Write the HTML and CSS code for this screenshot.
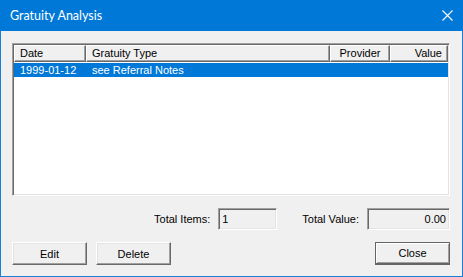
FILE: index.html
```html
<!DOCTYPE html>
<html lang="en">
<head>
    <meta charset="UTF-8">
    <title>Gratuity Analysis</title>
    <link rel="stylesheet" href="styles.css">
</head>
<body>
    <div class="window">
        <div class="titlebar">
            <span class="title">Gratuity Analysis</span>
            <svg class="close-x" width="11" height="11" viewBox="0 0 11 11">
                <path d="M0.5 0.5 L10.5 10.5 M10.5 0.5 L0.5 10.5" stroke="#fff" stroke-width="1.1" fill="none"/>
            </svg>
        </div>
        <div class="content">
            <div class="list">
                <div class="list-header">
                    <div class="col col-date">Date</div>
                    <div class="col col-type">Gratuity Type</div>
                    <div class="col col-provider">Provider</div>
                    <div class="col col-value">Value</div>
                </div>
                <div class="list-row selected">
                    <div class="cell col-date">1999-01-12</div>
                    <div class="cell col-type">see Referral Notes</div>
                    <div class="cell col-provider"></div>
                    <div class="cell col-value"></div>
                </div>
            </div>
            <div class="totals">
                <label>Total Items:</label>
                <div class="field field-items">1</div>
                <label class="label-value">Total Value:</label>
                <div class="field field-value">0.00</div>
            </div>
            <div class="buttons">
                <button class="btn">Edit</button>
                <button class="btn">Delete</button>
                <button class="btn btn-default">Close</button>
            </div>
        </div>
    </div>
</body>
</html>
```

FILE: styles.css
```css
body {
    margin: 0;
    padding: 0;
    background-color: #f0f0f0;
    font-family: "Liberation Sans", Arial, sans-serif;
    font-size: 11px;
    color: #000;
}
.window {
    width: 463px;
    height: 277px;
    box-sizing: border-box;
    border: 1px solid #1a7fd4;
    border-top: none;
    background-color: #f0f0f0;
}
.titlebar {
    height: 31px;
    margin: 0 -1px;
    background-color: #0078d7;
    color: #fff;
    display: flex;
    align-items: center;
    justify-content: space-between;
    padding: 0 10px 0 10px;
    font-family: Lato, "Noto Sans", sans-serif;
    font-size: 12.5px;
}
.title {
    margin-top: -1px;
}
.close-x {
    margin-top: -1px;
}
.content {
    padding: 12px 12px 0 11px;
}
.list {
    height: 153px;
    box-sizing: border-box;
    background-color: #fff;
    border-top: 1px solid #a0a0a0;
    border-left: 1px solid #a0a0a0;
    border-right: 1px solid #fff;
    border-bottom: 1px solid #fff;
    box-shadow: inset 1px 1px 0 #696969, inset -1px -1px 0 #e3e3e3;
    padding: 1px;
}
.list-header {
    display: flex;
    height: 17px;
}
.col {
    box-sizing: border-box;
    height: 17px;
    line-height: 15px;
    background-color: #f0f0f0;
    border-top: 1px solid #fff;
    border-left: 1px solid #fff;
    border-right: 1px solid #696969;
    border-bottom: 1px solid #696969;
    box-shadow: inset -1px -1px 0 #a0a0a0;
    padding: 0 5px;
    white-space: nowrap;
}
.col-date { width: 72px; }
.col-type { width: 244px; }
.col-provider { width: 60px; text-align: center; }
.col-value { width: 58px; text-align: right; }
.list-row {
    display: flex;
    height: 14px;
    line-height: 14px;
    margin-top: 1px;
}
.list-row.selected {
    background-color: #0078d7;
    color: #fff;
}
.cell {
    box-sizing: border-box;
    padding: 0 6px;
    white-space: nowrap;
}
.totals {
    display: flex;
    align-items: center;
    justify-content: flex-end;
    margin-top: 12px;
    height: 22px;
}
.totals label {
    margin-right: 8px;
}
.label-value {
    margin-left: 25px;
}
.field {
    box-sizing: border-box;
    height: 22px;
    line-height: 18px;
    border-top: 1px solid #a0a0a0;
    border-left: 1px solid #a0a0a0;
    border-right: 1px solid #fff;
    border-bottom: 1px solid #fff;
    box-shadow: inset 1px 1px 0 #696969, inset -1px -1px 0 #e3e3e3;
    padding: 1px 3px;
}
.field-items {
    width: 59px;
}
.field-value {
    width: 83px;
    text-align: right;
}
.buttons {
    display: flex;
    gap: 9px;
    margin-top: 12px;
}
.btn {
    width: 75px;
    height: 23px;
    box-sizing: border-box;
    font-family: "Liberation Sans", Arial, sans-serif;
    font-size: 11px;
    color: #000;
    background-color: #f0f0f0;
    border-top: 1px solid #fff;
    border-left: 1px solid #fff;
    border-right: 1px solid #696969;
    border-bottom: 1px solid #696969;
    box-shadow: inset -1px -1px 0 #a0a0a0, inset 1px 1px 0 #e3e3e3;
    padding: 0;
}
.btn-default {
    margin-left: auto;
    border: 1px solid #646464;
    border-bottom-width: 2px;
    box-shadow: inset 1px 1px 0 #fff, inset -1px -1px 0 #a0a0a0;
}
```
